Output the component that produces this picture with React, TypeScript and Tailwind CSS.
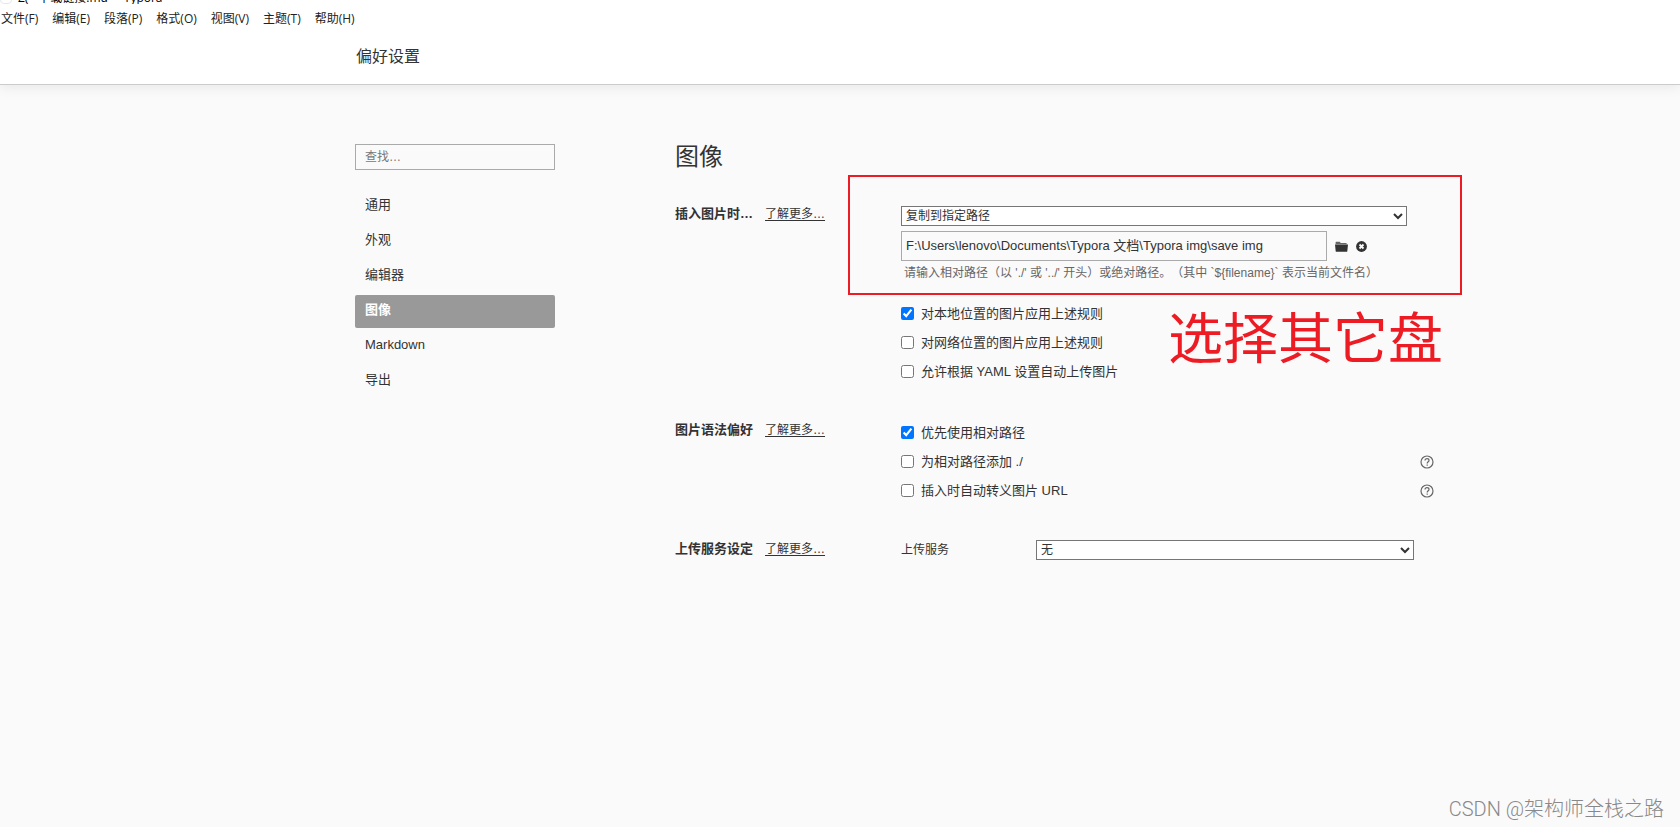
import { useState } from 'react';

const MENUS = ['文件(F)', '编辑(E)', '段落(P)', '格式(O)', '视图(V)', '主题(T)', '帮助(H)'];
const TABS = ['通用', '外观', '编辑器', '图像', 'Markdown', '导出'];

function FolderIcon() {
  return (
    <svg width="13" height="11" viewBox="0 0 13 11" fill="currentColor" aria-hidden="true">
      <path d="M1 0.8h3.8l0.9 1.2H11.6v1.3H0.6V1.2z" opacity="0.75" />
      <path d="M0 3.6h13l-0.7 6.6a0.6 0.6 0 0 1-0.6 0.5H1.3a0.6 0.6 0 0 1-0.6-0.5z" />
    </svg>
  );
}

function ClearIcon() {
  return (
    <svg width="11" height="11" viewBox="0 0 11 11" aria-hidden="true">
      <circle cx="5.5" cy="5.5" r="5.4" fill="currentColor" />
      <path d="M3.5 3.5l4 4M7.5 3.5l-4 4" stroke="#fafafa" strokeWidth="1.8" />
    </svg>
  );
}

function HelpIcon() {
  return (
    <svg width="14" height="14" viewBox="0 0 14 14" fill="none" stroke="currentColor" aria-hidden="true">
      <circle cx="7" cy="7" r="6" strokeWidth="1.2" />
      <path d="M5 5.6C5 4.3 5.9 3.6 7 3.6s2 0.7 2 1.8C9 6.7 7.2 6.8 7.2 8.4" strokeWidth="1.2" />
      <path d="M7.2 9.4v1.3" strokeWidth="1.2" />
    </svg>
  );
}

function SectionLabel({ title }: { title: string }) {
  return (
    <div className="flex h-6 w-[226px] shrink-0 items-center gap-3">
      <h3 className="text-[13px] font-bold">{title}</h3>
      <a href="#more" className="text-xs underline underline-offset-2">
        了解更多…
      </a>
    </div>
  );
}

interface OptionProps {
  label: string;
  checked?: boolean;
  help?: boolean;
}

function Option({ label, checked = false, help = false }: OptionProps) {
  const [on, setOn] = useState(checked);

  return (
    <div className="flex h-[29px] items-center justify-between">
      <label className="flex items-center gap-[7px] text-[13px] leading-4">
        <input type="checkbox" className="size-[13px]" checked={on} onChange={(e) => setOn(e.target.checked)} />
        {label}
      </label>
      {help && (
        <button type="button" aria-label="帮助" className="text-[#666]">
          <HelpIcon />
        </button>
      )}
    </div>
  );
}

export default function App() {
  const [tab, setTab] = useState('图像');
  const [path, setPath] = useState('F:\\Users\\lenovo\\Documents\\Typora 文档\\Typora img\\save img');

  return (
    <div className="relative flex min-h-screen flex-col bg-[#fafafa] font-['Liberation_Sans','Noto_Sans_CJK_SC',sans-serif] text-[#333]">
      <header className="border-b border-[#ccc] bg-white shadow-[0_2px_12px_rgba(0,0,0,0.08)]">
        {/* window title, scrolled past the top edge */}
        <div className="flex h-1 items-end gap-[6px] overflow-hidden font-['Open_Sans','Noto_Sans_CJK_SC',sans-serif] text-xs leading-3 whitespace-nowrap text-black">
          <span className="h-4 w-3 rounded-b border border-gray-200" />
          <span>Z(-</span>
          <span>下载链接.md</span>
          <span>-</span>
          <span>Typora</span>
        </div>
        <nav className="flex h-[30px] items-center gap-[14px] px-px font-['Open_Sans','Noto_Sans_CJK_SC',sans-serif] text-xs text-[#222]">
          {MENUS.map((m) => (
            <button key={m} type="button">
              {m}
            </button>
          ))}
        </nav>
        <h1 className="h-[50px] pt-[11px] pl-[356px] text-base leading-6">偏好设置</h1>
      </header>

      <div className="flex pt-[59px] pr-[246px] pl-[355px]">
        <aside className="w-[200px] shrink-0">
          <input
            type="search"
            aria-label="查找"
            placeholder="查找…"
            className="h-[26px] w-full border border-[#aaa] px-[9px] text-xs placeholder:text-[#777]"
          />
          <nav className="mt-5 flex flex-col gap-[2px]">
            {TABS.map((t) => (
              <button
                key={t}
                type="button"
                onClick={() => setTab(t)}
                className={`h-[33px] rounded-xs px-[10px] pb-1 text-left text-[13px] ${
                  t === tab ? 'bg-[#999] font-bold text-white' : ''
                }`}
              >
                {t}
              </button>
            ))}
          </nav>
        </aside>

        <main className="ml-[120px] min-w-0 flex-1">
          <h2 className="pt-px text-2xl leading-6">图像</h2>

          <section className="mt-[33px] flex items-start">
            <SectionLabel title="插入图片时…" />
            <div className="relative flex-1 pt-1">
              <div className="relative pb-[18px]">
                <select
                  aria-label="插入图片时"
                  className="block h-5 w-[95%] border border-[#767676] bg-white text-xs"
                >
                  <option>复制到指定路径</option>
                </select>
                <div className="mt-[5px] flex items-center gap-2">
                  <input
                    type="text"
                    aria-label="路径"
                    value={path}
                    onChange={(e) => setPath(e.target.value)}
                    className="h-[30px] w-4/5 border border-[#aaa] px-1 pb-[3px] text-[13px]"
                  />
                  <button type="button" aria-label="打开文件夹">
                    <FolderIcon />
                  </button>
                  <button type="button" aria-label="清除">
                    <ClearIcon />
                  </button>
                </div>
                <p className="mt-1 pl-[3px] text-xs leading-4 whitespace-nowrap text-[#666] [text-spacing-trim:space-all]">
                  请输入相对路径（以 './' 或 '../' 开头）或绝对路径。（其中 `${'{'}filename{'}'}` 表示当前文件名）
                </p>
                <div className="pointer-events-none absolute -top-[31px] -right-[28px] bottom-1 -left-[53px] border-2 border-[#ed1c24]" />
              </div>
              <Option label="对本地位置的图片应用上述规则" checked />
              <Option label="对网络位置的图片应用上述规则" />
              <Option label="允许根据 YAML 设置自动上传图片" />
              <p className="pointer-events-none absolute right-[-9px] bottom-[17px] text-[55px] leading-[60px] whitespace-nowrap text-[#ed1c24]">
                选择其它盘
              </p>
            </div>
          </section>

          <section className="mt-8 flex items-start">
            <SectionLabel title="图片语法偏好" />
            <div className="flex-1">
              <Option label="优先使用相对路径" checked />
              <Option label="为相对路径添加 ./" help />
              <Option label="插入时自动转义图片 URL" help />
            </div>
          </section>

          <section className="mt-8 flex items-start">
            <SectionLabel title="上传服务设定" />
            <div className="flex h-[26px] flex-1 items-center">
              <label htmlFor="uploader" className="w-[135px] text-xs">
                上传服务
              </label>
              <select id="uploader" className="mr-5 h-5 flex-1 border border-[#767676] bg-white text-xs">
                <option>无</option>
              </select>
            </div>
          </section>
        </main>
      </div>

      <footer className="mt-auto pr-4 pb-1 text-right font-[Roboto,'Noto_Sans_CJK_SC',sans-serif] text-[20px] leading-7 font-light text-[#888]">
        CSDN @架构师全栈之路
      </footer>
    </div>
  );
}
